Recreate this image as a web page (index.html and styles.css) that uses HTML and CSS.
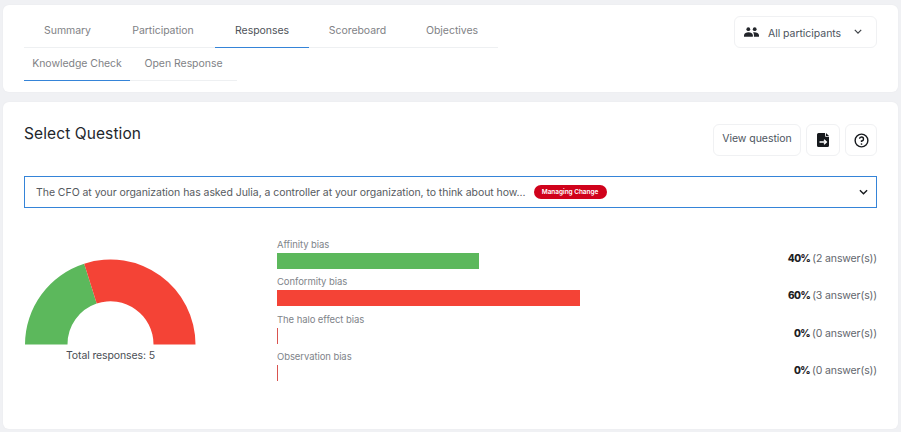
FILE: index.html
```html
<!DOCTYPE html>
<html lang="en">
<head>
<meta charset="utf-8">
<title>Responses</title>
<link rel="stylesheet" href="styles.css">
</head>
<body>
<section class="card nav-card">
  <div class="nav-tabs-wrap">
    <div class="tabs">
      <a class="tab tab-w1">Summary</a>
      <a class="tab tab-w2">Participation</a>
      <a class="tab tab-w3 active">Responses</a>
      <a class="tab tab-w4">Scoreboard</a>
      <a class="tab tab-w5">Objectives</a>
    </div>
    <div class="tabs sub">
      <a class="tab sub-w1 active">Knowledge Check</a>
      <a class="tab sub-w2">Open Response</a>
    </div>
  </div>
  <button class="btn participants">
    <svg class="ico-people" viewBox="0 0 16 10" width="15" height="10"><circle cx="4.600" cy="2" r="2"/><circle cx="11.400" cy="2" r="2"/><path d="M0 10V8.400C0 6.400 2.600 5.200 4.800 5.200S9.400 6.400 9.400 8.400V10Z"/><path d="M10.600 10V8.200C10.600 7 10.200 6.100 9.600 5.500 10.100 5.300 10.700 5.200 11.200 5.200 13.400 5.200 16 6.400 16 8.400V10Z"/></svg>
    <span class="participants-label">All participants</span>
    <svg class="chev" viewBox="0 0 10 6" width="8" height="5"><path d="M1 1l4 4 4-4"/></svg>
  </button>
</section>

<section class="card main-card">
  <header class="head">
    <h1>Select Question</h1>
    <div class="actions">
      <button class="btn view">View question</button>
      <button class="btn square wide">
        <svg viewBox="0 0 12 14" width="12" height="14"><path class="ink" d="M1.500 0H8L8.300 3.700H12V12.500A1.500 1.500 0 0 1 10.500 14H1.500A1.500 1.500 0 0 1 0 12.500V1.500A1.500 1.500 0 0 1 1.500 0Z"/><path class="ink" d="M9 0L12 3H9Z"/><path class="cut" d="M2.500 9H9M7 6.800L9.400 9 7 11.200"/></svg>
      </button>
      <button class="btn square">
        <svg viewBox="0 0 16 16" width="15" height="15"><circle class="ring" cx="8" cy="8" r="6.800"/><path class="ring" d="M5.900 6.200A2.100 2.100 0 1 1 8 8.400V9.600"/><circle class="ink" cx="8" cy="11.700" r=".9"/></svg>
      </button>
    </div>
  </header>

  <div class="select">
    <span class="select-text">The CFO at your organization has asked Julia, a controller at your organization, to think about how...</span>
    <span class="badge">Managing Change</span>
    <svg class="chev dark" viewBox="0 0 10 6" width="9" height="6"><path d="M1 1l4 4 4-4"/></svg>
  </div>

  <div class="results">
    <figure class="gauge">
      <svg viewBox="0 0 171 86" width="171" height="86">
        <path class="g" d="M0 85.500A85 85 0 0 1 59.200 4.700L71.700 44.600A43 43 0 0 0 42.500 85.500Z"/>
        <path class="r" d="M59.200 4.700A85 85 0 0 1 170.500 85.500H128.500A43 43 0 0 0 71.700 44.600Z"/>
      </svg>
      <figcaption>Total responses: 5</figcaption>
    </figure>
    <div class="bars">
      <div class="row">
        <div class="label">Affinity bias</div>
        <div class="bar-line"><div class="track"><div class="bar green" style="width:40%"></div></div><div class="stat"><b>40%</b> (2 answer(s))</div></div>
      </div>
      <div class="row">
        <div class="label">Conformity bias</div>
        <div class="bar-line"><div class="track"><div class="bar red" style="width:60%"></div></div><div class="stat"><b>60%</b> (3 answer(s))</div></div>
      </div>
      <div class="row">
        <div class="label">The halo effect bias</div>
        <div class="bar-line"><div class="track"><div class="bar zero"></div></div><div class="stat"><b>0%</b> (0 answer(s))</div></div>
      </div>
      <div class="row">
        <div class="label">Observation bias</div>
        <div class="bar-line"><div class="track"><div class="bar zero"></div></div><div class="stat"><b>0%</b> (0 answer(s))</div></div>
      </div>
    </div>
  </div>
</section>
</body>
</html>
```
FILE: styles.css
```css
* { box-sizing: border-box; }
html, body { height: 100%; }
body {
  margin: 0;
  padding: 5px 3px 0 3px;
  background: #f0f1f4;
  font-family: Inter, "Noto Sans", sans-serif;
  font-size: 10.500px;
  letter-spacing: -.05px;
  color: #6f7378;
  overflow: hidden;
}
.card {
  background: #fff;
  border-radius: 6px;
  box-shadow: 0 0 2px rgba(0,0,0,.04);
}
.nav-card {
  height: 87px;
  padding: 11px 21px 0 21px;
  display: flex;
  justify-content: space-between;
  align-items: flex-start;
}
.nav-tabs-wrap { display: flex; flex-direction: column; align-items: flex-start; }
.tabs { display: flex; border-bottom: 1px solid #eef0f2; height: 32px; }
.tabs.sub { height: 33px; }
.tab {
  display: flex;
  align-items: center;
  justify-content: center;
  margin-bottom: -1px;
  padding-bottom: 2px;
  border-bottom: 1px solid transparent;
  color: #7f8286;
  white-space: nowrap;
}
.tab-w1 { width: 87px; }
.tab-w2 { width: 104px; }
.tab-w3 { width: 94px; }
.tab-w4 { width: 97px; }
.tab-w5 { width: 92px; }
.sub-w1 { width: 106px; }
.sub-w2 { width: 107px; }
.tab.active { border-bottom-color: #3584d8; }
.tab-w3.active { color: #4e5258; }

.btn {
  font: inherit;
  letter-spacing: inherit;
  background: #fff;
  border: 1px solid #f0f1f3;
  border-radius: 6px;
  display: flex;
  align-items: center;
  padding: 0;
  color: #4d5560;
}
.participants { width: 143px; height: 32px; padding-left: 9px; }
.ico-people { fill: #23262b; flex: none; margin-top: -1px; }
.participants-label { margin-left: 9px; flex: 1; text-align: left; padding-top: 3px; }
.participants .chev { margin-right: 14px; stroke: #3e4247; margin-top: -2px; }
.chev { fill: none; stroke: #15181c; stroke-width: 1.500; flex: none; }

.main-card {
  margin-top: 10px;
  height: 327px;
  padding: 22px 21px 0 21px;
}
.head { display: flex; justify-content: space-between; align-items: flex-start; }
h1 {
  margin: 0;
  font-size: 15.500px;
  font-weight: 400;
  letter-spacing: .1px;
  line-height: 20px;
  color: #23262b;
}
.actions { display: flex; gap: 5px; }
.view { width: 88px; height: 32px; justify-content: center; padding-bottom: 3px; }
.square { width: 32px; height: 32px; justify-content: center; }
.square.wide { width: 34px; }
.ink { fill: #16191d; }
.cut { fill: none; stroke: #fff; stroke-width: 1.300; }
.ring { fill: none; stroke: #16191d; stroke-width: 1.500; }

.select {
  margin-top: 20px;
  height: 32px;
  border: 1px solid #3584d8;
  display: flex;
  align-items: center;
  padding: 0 8px 0 11px;
  color: #565a60;
}
.select-text { white-space: nowrap; }
.badge {
  margin-left: 8px;
  width: 73px;
  height: 14px;
  border-radius: 7px;
  background: #d0021b;
  color: #fff;
  font-size: 6.500px;
  font-weight: 600;
  display: flex;
  align-items: center;
  justify-content: center;
  white-space: nowrap;
}
.select .chev { margin-left: auto; }

.results {
  display: flex;
  align-items: flex-start;
  padding: 31px 0 0 1px;
}
.gauge {
  margin: 20px 0 0 0;
  width: 252px;
  flex: none;
}
.gauge svg { display: block; }
.g { fill: #5cb85c; }
.r { fill: #f44336; }
figcaption {
  width: 171px;
  text-align: center;
  margin-top: 4px;
  letter-spacing: -.12px;
  color: #4a4e54;
  line-height: 14px;
}
.bars { flex: 1; display: flex; flex-direction: column; gap: 7.330px; }
.row { height: 30px; display: flex; flex-direction: column; }
.label { height: 14px; line-height: 11px; font-size: 9.500px; letter-spacing: -.08px; color: #80848a; white-space: nowrap; }
.bar-line { display: flex; align-items: center; justify-content: space-between; height: 16px; }
.track { width: 505px; height: 16px; flex: none; }
.bar { height: 16px; }
.green { background: #5cb85c; }
.red { background: #f44336; }
.zero { width: 1px; background: #d9534f; }
.stat { white-space: nowrap; color: #62666c; padding-bottom: 5px; letter-spacing: -.12px; }
.stat b { color: #1d2024; font-size: 10px; font-weight: 800; letter-spacing: -.5px; margin-right: -1px; }
```
